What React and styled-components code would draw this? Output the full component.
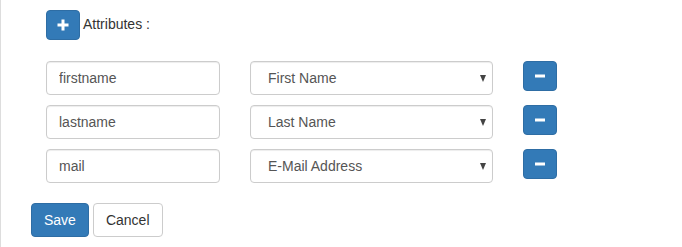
import React, { useState } from 'react';
import styled, { createGlobalStyle } from 'styled-components';

const GlobalStyle = createGlobalStyle`
  body {
    margin: 0;
    background: #fff;
    font-family: 'Liberation Sans', Arial, sans-serif;
    font-size: 14px;
    color: #333;
  }
`;

const Panel = styled.div`
  box-sizing: border-box;
  height: 247px;
  border-left: 1px solid #ddd;
  padding: 10px 0 0 30px;
`;

const Header = styled.div`
  display: flex;
  align-items: center;
  gap: 3px;
  margin-left: 15px;
  margin-bottom: 21px;
`;

const Label = styled.span`
  font-size: 14px;
  color: #333;
  margin-top: -2px;
`;

const IconButton = styled.button`
  box-sizing: border-box;
  width: 34px;
  height: 30px;
  padding: 0;
  display: flex;
  align-items: center;
  justify-content: center;
  background: #337ab7;
  border: 1px solid #2e6da4;
  border-radius: 4px;
  cursor: pointer;
`;

const Rows = styled.div`
  display: flex;
  flex-direction: column;
  gap: 10px;
  margin-left: 15px;
`;

const Row = styled.div`
  display: flex;
  align-items: flex-start;
  gap: 30px;
`;

const TextInput = styled.input`
  box-sizing: border-box;
  width: 174px;
  height: 34px;
  padding: 6px 12px;
  font-family: inherit;
  font-size: 14px;
  color: #555;
  border: 1px solid #ccc;
  border-radius: 4px;
  box-shadow: inset 0 1px 1px rgba(0, 0, 0, 0.075);
  outline: none;
`;

const SelectWrap = styled.div`
  position: relative;
  width: 243px;
  height: 34px;
`;

const Select = styled.select`
  box-sizing: border-box;
  width: 100%;
  height: 34px;
  padding: 6px 12px 6px 17px;
  font-family: inherit;
  font-size: 14px;
  color: #555;
  background: #fff;
  border: 1px solid #ccc;
  border-radius: 4px;
  box-shadow: inset 0 1px 1px rgba(0, 0, 0, 0.075);
  appearance: none;
  outline: none;
`;

const Caret = styled.span`
  position: absolute;
  right: 7px;
  top: 14px;
  width: 0;
  height: 0;
  border-left: 3.5px solid transparent;
  border-right: 3.5px solid transparent;
  border-top: 7px solid #444;
  pointer-events: none;
`;

const Actions = styled.div`
  display: flex;
  gap: 4px;
  margin-top: 20px;
`;

const Button = styled.button`
  box-sizing: border-box;
  height: 34px;
  padding: 6px 12px;
  font-family: inherit;
  font-size: 14px;
  border-radius: 4px;
  cursor: pointer;
  color: ${(p) => (p.$primary ? '#fff' : '#333')};
  background: ${(p) => (p.$primary ? '#337ab7' : '#fff')};
  border: 1px solid ${(p) => (p.$primary ? '#2e6da4' : '#ccc')};
`;

const PlusIcon = () => (
  <svg width="12" height="12" viewBox="0 0 12 12">
    <rect x="0.5" y="4.5" width="11" height="3" fill="#fff" />
    <rect x="4.5" y="0.5" width="3" height="11" fill="#fff" />
  </svg>
);

const MinusIcon = () => (
  <svg width="12" height="4" viewBox="0 0 12 4">
    <rect x="1" y="0.5" width="10" height="3" fill="#fff" />
  </svg>
);

const options = ['First Name', 'Last Name', 'E-Mail Address'];

const App = () => {
  const [attrs, setAttrs] = useState([
    { key: 'firstname', field: 'First Name' },
    { key: 'lastname', field: 'Last Name' },
    { key: 'mail', field: 'E-Mail Address' },
  ]);

  const update = (i, patch) =>
    setAttrs(attrs.map((a, j) => (j === i ? { ...a, ...patch } : a)));

  return (
    <Panel>
      <GlobalStyle />
      <Header>
        <IconButton onClick={() => setAttrs([...attrs, { key: '', field: 'First Name' }])}>
          <PlusIcon />
        </IconButton>
        <Label>Attributes :</Label>
      </Header>
      <Rows>
        {attrs.map((a, i) => (
          <Row key={i}>
            <TextInput value={a.key} onChange={(e) => update(i, { key: e.target.value })} />
            <SelectWrap>
              <Select value={a.field} onChange={(e) => update(i, { field: e.target.value })}>
                {options.map((o) => (
                  <option key={o}>{o}</option>
                ))}
              </Select>
              <Caret />
            </SelectWrap>
            <IconButton onClick={() => setAttrs(attrs.filter((_, j) => j !== i))}>
              <MinusIcon />
            </IconButton>
          </Row>
        ))}
      </Rows>
      <Actions>
        <Button $primary>Save</Button>
        <Button>Cancel</Button>
      </Actions>
    </Panel>
  );
};

export default App;
